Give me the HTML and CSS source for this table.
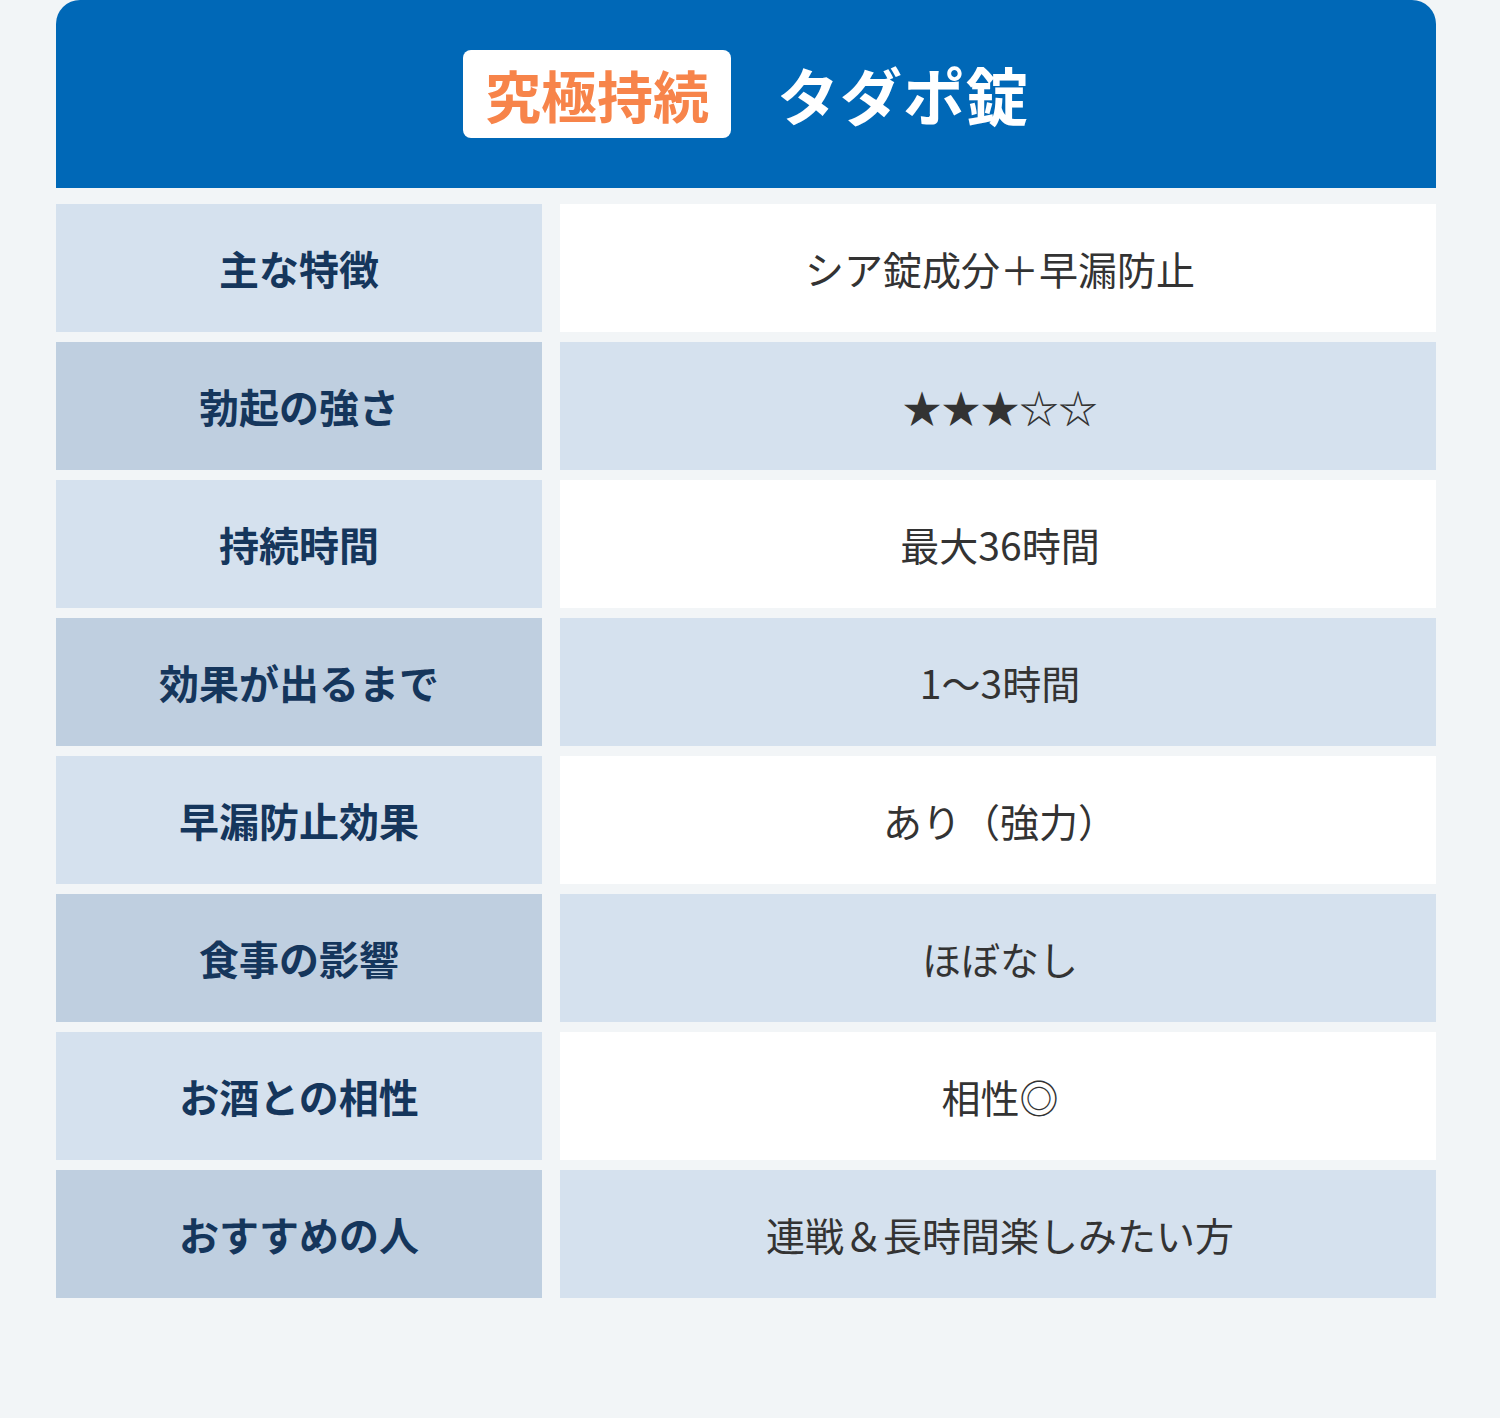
FILE: index.html
```html
<!DOCTYPE html>
<html lang="ja">
<head>
<meta charset="utf-8">
<link rel="stylesheet" href="styles.css">
</head>
<body>
<div class="wrap">
  <div class="head">
    <span class="badge">究極持続</span>
    <span class="title">タダポ錠</span>
  </div>
  <div class="table">
    <div class="row odd"><div class="label">主な特徴</div><div class="value">シア錠成分＋早漏防止</div></div>
    <div class="row even"><div class="label">勃起の強さ</div><div class="value">★★★☆☆</div></div>
    <div class="row odd"><div class="label">持続時間</div><div class="value">最大36時間</div></div>
    <div class="row even"><div class="label">効果が出るまで</div><div class="value">1〜3時間</div></div>
    <div class="row odd"><div class="label">早漏防止効果</div><div class="value">あり（強力）</div></div>
    <div class="row even"><div class="label">食事の影響</div><div class="value">ほぼなし</div></div>
    <div class="row odd"><div class="label">お酒との相性</div><div class="value">相性◎</div></div>
    <div class="row even"><div class="label">おすすめの人</div><div class="value">連戦＆長時間楽しみたい方</div></div>
  </div>
</div>
</body>
</html>
```
FILE: styles.css
```css
html, body {
  margin: 0;
  padding: 0;
  background: #f2f5f7;
}
body {
  font-family: "Noto Sans CJK JP", "Noto Sans", sans-serif;
  width: 1500px;
  height: 1418px;
}
.wrap {
  margin: 0 64px 0 56px;
  width: 1380px;
}
.head {
  height: 188px;
  background: #0068b7;
  border-radius: 24px 24px 0 0;
  display: flex;
  align-items: center;
  justify-content: center;
  gap: 46px;
}
.badge {
  background: #fff;
  border-radius: 8px;
  width: 268px;
  height: 88px;
  display: flex;
  align-items: center;
  justify-content: center;
  color: #f7844a;
  font-size: 56px;
  font-weight: 700;
  line-height: 1;
}
.title {
  color: #fff;
  font-size: 62px;
  font-weight: 700;
  line-height: 1;
  letter-spacing: 1px;
}
.table {
  margin-top: 16px;
  display: flex;
  flex-direction: column;
  gap: 10px;
}
.row {
  display: grid;
  grid-template-columns: 486px 876px;
  column-gap: 18px;
  height: 128px;
}
.label, .value {
  display: flex;
  align-items: center;
  justify-content: center;
  line-height: 1;
}
.label {
  color: #15365c;
  font-weight: 700;
  font-size: 40px;
}
.value {
  color: #333;
  font-weight: 400;
  font-size: 39px;
  padding-left: 4px;
}
.odd .label { background: #d5e1ee; }
.odd .value { background: #ffffff; }
.even .label { background: #bfcfe0; }
.even .value { background: #d5e1ee; }
```
